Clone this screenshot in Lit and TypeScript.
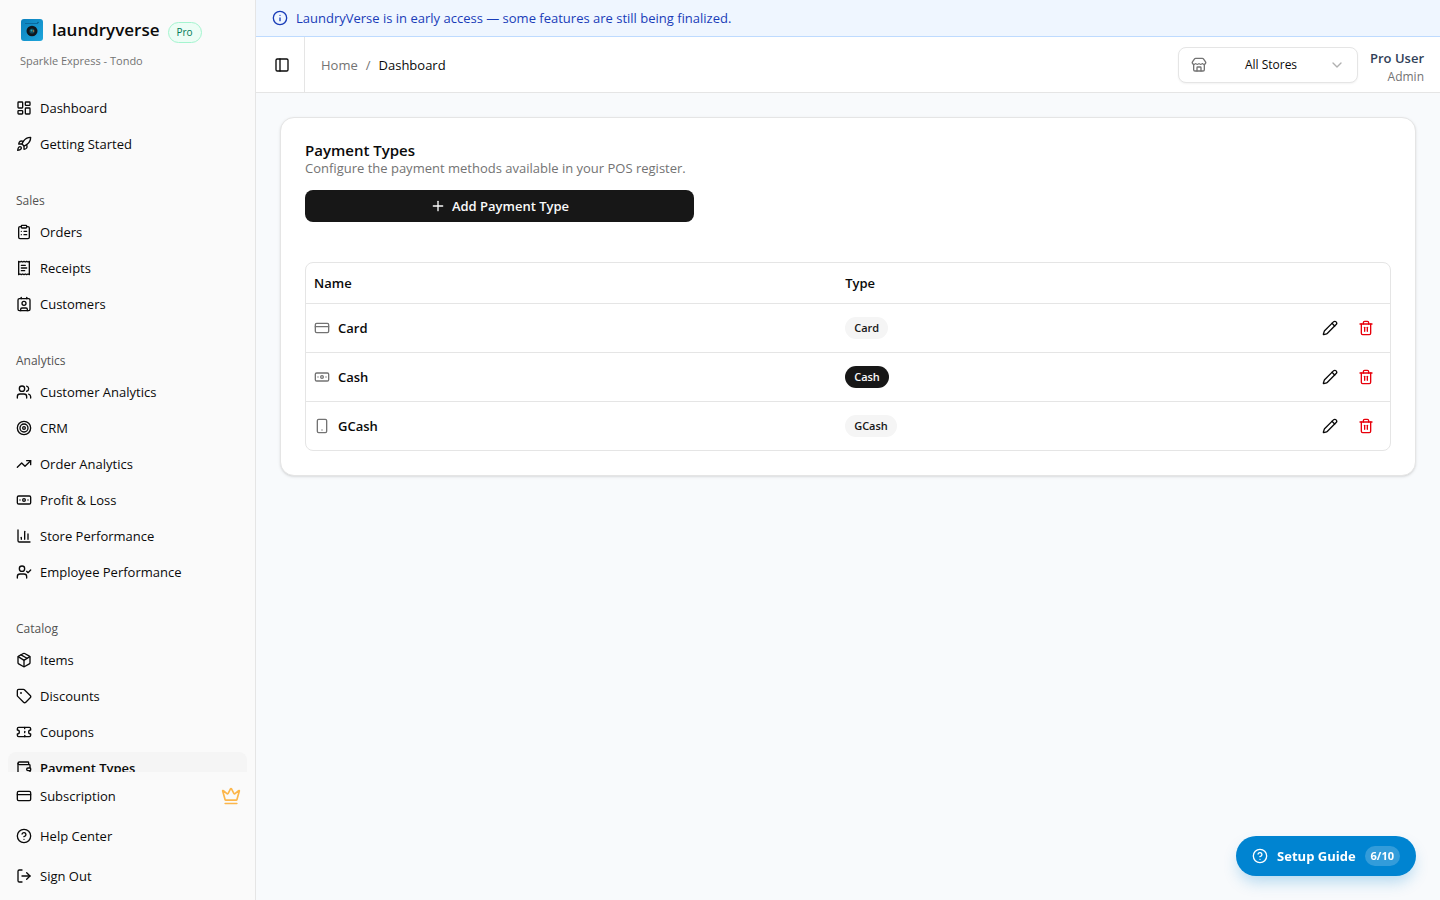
import { LitElement, html, svg, css, type SVGTemplateResult } from "lit";
import { customElement, property } from "lit/decorators.js";
import { classMap } from "lit/directives/class-map.js";

const ICONS: Record<string, SVGTemplateResult> = {
  dashboard: svg`<rect width="7" height="9" x="3" y="3" rx="1"/><rect width="7" height="5" x="14" y="3" rx="1"/><rect width="7" height="9" x="14" y="12" rx="1"/><rect width="7" height="5" x="3" y="16" rx="1"/>`,
  rocket: svg`<path d="M4.5 16.5c-1.5 1.26-2 5-2 5s3.74-.5 5-2c.71-.84.7-2.13-.09-2.91a2.18 2.18 0 0 0-2.91-.09z"/><path d="m12 15-3-3a22 22 0 0 1 2-3.95A12.88 12.88 0 0 1 22 2c0 2.72-.78 7.5-6 11a22.35 22.35 0 0 1-4 2z"/><path d="M9 12H4s.55-3.03 2-4c1.62-1.08 5 0 5 0"/><path d="M12 15v5s3.03-.55 4-2c1.08-1.62 0-5 0-5"/>`,
  clipboard: svg`<rect width="8" height="4" x="8" y="2" rx="1"/><path d="M16 4h2a2 2 0 0 1 2 2v14a2 2 0 0 1-2 2H6a2 2 0 0 1-2-2V6a2 2 0 0 1 2-2h2"/><path d="M12 11h4"/><path d="M12 16h4"/><path d="M8 11h.01"/><path d="M8 16h.01"/>`,
  receipt: svg`<path d="M4 2v20l2-1 2 1 2-1 2 1 2-1 2 1 2-1 2 1V2l-2 1-2-1-2 1-2-1-2 1-2-1-2 1Z"/><path d="M14 8H8"/><path d="M16 12H8"/><path d="M13 16H8"/>`,
  contact: svg`<path d="M16 2v2"/><path d="M7 22v-2a2 2 0 0 1 2-2h6a2 2 0 0 1 2 2v2"/><path d="M8 2v2"/><circle cx="12" cy="11" r="3"/><rect x="3" y="4" width="18" height="18" rx="2"/>`,
  users: svg`<path d="M16 21v-2a4 4 0 0 0-4-4H6a4 4 0 0 0-4 4v2"/><circle cx="9" cy="7" r="4"/><path d="M22 21v-2a4 4 0 0 0-3-3.87"/><path d="M16 3.13a4 4 0 0 1 0 7.75"/>`,
  target: svg`<circle cx="12" cy="12" r="10"/><circle cx="12" cy="12" r="6"/><circle cx="12" cy="12" r="2"/>`,
  trending: svg`<path d="M16 7h6v6"/><path d="m22 7-8.5 8.5-5-5L2 17"/>`,
  banknote: svg`<rect width="20" height="12" x="2" y="6" rx="2"/><circle cx="12" cy="12" r="2"/><path d="M6 12h.01M18 12h.01"/>`,
  chart: svg`<path d="M3 3v16a2 2 0 0 0 2 2h16"/><path d="M18 17V9"/><path d="M13 17V5"/><path d="M8 17v-3"/>`,
  userCheck: svg`<path d="m16 11 2 2 4-4"/><path d="M16 21v-2a4 4 0 0 0-4-4H6a4 4 0 0 0-4 4v2"/><circle cx="9" cy="7" r="4"/>`,
  box: svg`<path d="M11 21.73a2 2 0 0 0 2 0l7-4A2 2 0 0 0 21 16V8a2 2 0 0 0-1-1.73l-7-4a2 2 0 0 0-2 0l-7 4A2 2 0 0 0 3 8v8a2 2 0 0 0 1 1.73z"/><path d="M12 22V12"/><path d="m3.3 7 7.703 4.734a2 2 0 0 0 1.994 0L20.7 7"/><path d="m7.5 4.27 9 5.15"/>`,
  tag: svg`<path d="M12.586 2.586A2 2 0 0 0 11.172 2H4a2 2 0 0 0-2 2v7.172a2 2 0 0 0 .586 1.414l8.704 8.704a2.426 2.426 0 0 0 3.42 0l6.58-6.58a2.426 2.426 0 0 0 0-3.42z"/><circle cx="7.5" cy="7.5" r=".5" fill="currentColor"/>`,
  ticket: svg`<path d="M2 9a3 3 0 0 1 0 6v2a2 2 0 0 0 2 2h16a2 2 0 0 0 2-2v-2a3 3 0 0 1 0-6V7a2 2 0 0 0-2-2H4a2 2 0 0 0-2 2Z"/><path d="M13 5v2"/><path d="M13 17v2"/><path d="M13 11v2"/>`,
  wallet: svg`<path d="M19 7V4a1 1 0 0 0-1-1H5a2 2 0 0 0 0 4h15a1 1 0 0 1 1 1v4h-3a2 2 0 0 0 0 4h3a1 1 0 0 0 1-1v-2a1 1 0 0 0-1-1"/><path d="M3 5v14a2 2 0 0 0 2 2h15a1 1 0 0 0 1-1v-4"/>`,
  card: svg`<rect width="20" height="14" x="2" y="5" rx="2"/><path d="M2 10h20"/>`,
  help: svg`<circle cx="12" cy="12" r="10"/><path d="M9.09 9a3 3 0 0 1 5.83 1c0 2-3 3-3 3"/><path d="M12 17h.01"/>`,
  logout: svg`<path d="M9 21H5a2 2 0 0 1-2-2V5a2 2 0 0 1 2-2h4"/><path d="m16 17 5-5-5-5"/><path d="M21 12H9"/>`,
  crown: svg`<path d="M11.562 3.266a.5.5 0 0 1 .876 0L15.39 8.87a1 1 0 0 0 1.516.294L21.183 5.5a.5.5 0 0 1 .798.519l-2.834 10.246a1 1 0 0 1-.956.734H5.81a1 1 0 0 1-.957-.734L2.02 6.02a.5.5 0 0 1 .798-.519l4.276 3.664a1 1 0 0 0 1.516-.294z"/><path d="M5 21h14"/>`,
  info: svg`<circle cx="12" cy="12" r="10"/><path d="M12 16v-4"/><path d="M12 8h.01"/>`,
  panel: svg`<rect width="18" height="18" x="3" y="3" rx="2"/><path d="M9 3v18"/>`,
  store: svg`<path d="M15 21v-5a1 1 0 0 0-1-1h-4a1 1 0 0 0-1 1v5"/><path d="M17.774 10.31a1.12 1.12 0 0 0-1.549 0 2.5 2.5 0 0 1-3.451 0 1.12 1.12 0 0 0-1.548 0 2.5 2.5 0 0 1-3.452 0 1.12 1.12 0 0 0-1.549 0 2.5 2.5 0 0 1-3.77-3.248l2.889-4.184A2 2 0 0 1 7 2h10a2 2 0 0 1 1.653.873l2.895 4.192a2.5 2.5 0 0 1-3.774 3.244"/><path d="M4 10.95V19a2 2 0 0 0 2 2h12a2 2 0 0 0 2-2v-8.05"/>`,
  chevron: svg`<path d="m6 9 6 6 6-6"/>`,
  plus: svg`<path d="M5 12h14"/><path d="M12 5v14"/>`,
  phone: svg`<rect width="14" height="20" x="5" y="2" rx="2"/><path d="M12 18h.01"/>`,
  pencil: svg`<path d="M21.174 6.812a1 1 0 0 0-3.986-3.987L3.842 16.174a2 2 0 0 0-.5.83l-1.321 4.352a.5.5 0 0 0 .623.622l4.353-1.32a2 2 0 0 0 .83-.497z"/><path d="m15 5 4 4"/>`,
  trash: svg`<path d="M3 6h18"/><path d="M19 6v14a2 2 0 0 1-2 2H7a2 2 0 0 1-2-2V6"/><path d="M8 6V4a2 2 0 0 1 2-2h4a2 2 0 0 1 2 2v2"/><path d="M10 11v6"/><path d="M14 11v6"/>`,
};

interface NavItem { icon: string; label: string; active?: boolean; premium?: boolean }
interface NavGroup { title?: string; items: NavItem[] }

const GROUPS: NavGroup[] = [
  { items: [
    { icon: "dashboard", label: "Dashboard" },
    { icon: "rocket", label: "Getting Started" },
  ] },
  { title: "Sales", items: [
    { icon: "clipboard", label: "Orders" },
    { icon: "receipt", label: "Receipts" },
    { icon: "contact", label: "Customers" },
  ] },
  { title: "Analytics", items: [
    { icon: "users", label: "Customer Analytics" },
    { icon: "target", label: "CRM" },
    { icon: "trending", label: "Order Analytics" },
    { icon: "banknote", label: "Profit & Loss" },
    { icon: "chart", label: "Store Performance" },
    { icon: "userCheck", label: "Employee Performance" },
  ] },
  { title: "Catalog", items: [
    { icon: "box", label: "Items" },
    { icon: "tag", label: "Discounts" },
    { icon: "ticket", label: "Coupons" },
    { icon: "wallet", label: "Payment Types", active: true },
  ] },
];

const FOOTER: NavItem[] = [
  { icon: "card", label: "Subscription", premium: true },
  { icon: "help", label: "Help Center" },
  { icon: "logout", label: "Sign Out" },
];

const PAYMENTS = [
  { icon: "card", name: "Card", primary: false },
  { icon: "banknote", name: "Cash", primary: true },
  { icon: "phone", name: "GCash", primary: false },
];

@customElement("ui-icon")
export class UiIcon extends LitElement {
  @property() name = "";
  static styles = css`
    :host { display: block; flex: none; width: 16px; height: 16px; }
    .glyph { display: block; width: 100%; height: 100%; }
  `;
  render() {
    return html`<svg class="glyph" viewBox="0 0 24 24" fill="none" stroke="currentColor" stroke-width="2" stroke-linecap="round" stroke-linejoin="round" aria-hidden="true">${ICONS[this.name]}</svg>`;
  }
}

@customElement("side-bar")
export class SideBar extends LitElement {
  static styles = css`
    * { box-sizing: border-box; }
    :host { display: flex; flex-direction: column; flex: none; box-sizing: border-box; width: 256px; height: 100%; background: #fafafa; border-right: 1px solid #e5e5e5; color: #0a0a0a; }
    .brand { padding: 17px 20px 15px; flex: none; }
    .brand-row { display: flex; align-items: center; gap: 8px; height: 26px; }
    .logo { flex: none; width: 24px; height: 24px; }
    .word { font-size: 17px; line-height: 26px; font-weight: 600; }
    .plan { align-self: flex-end; font-size: 10px; line-height: 19px; font-weight: 500; padding: 0 8px; border: 1px solid #a4f4cf; border-radius: 11px; background: #ecfdf5; color: #007a55; }
    .store { margin: 10px 0 0; font-size: 11px; line-height: 16px; color: #737373; }
    .nav { flex: 1; min-height: 0; overflow-y: auto; scrollbar-width: none; display: flex; flex-direction: column; gap: 8px; }
    .group { padding: 8px; flex: none; }
    .title { margin: 0; display: flex; align-items: center; height: 32px; padding: 2px 8px 0; font-size: 12px; font-weight: 500; color: #525252; }
    .list { list-style: none; margin: 0; padding: 0; display: flex; flex-direction: column; gap: 4px; }
    .foot { flex: none; padding: 8px; }
    .foot .list { gap: 8px; }
    .item { display: flex; align-items: center; gap: 8px; height: 32px; padding: 0 8px; border-radius: 8px; font-size: 13px; line-height: 20px; color: inherit; text-decoration: none; white-space: nowrap; }
    .active { background: #f5f5f5; font-weight: 600; }
    .label { flex: 1; }
    .crown { color: #fcb64b; width: 20px; height: 20px; margin-right: -2px; }
  `;
  private item(i: NavItem) {
    return html`<li><a href="#" class=${classMap({ item: true, active: !!i.active })}>
      <ui-icon name=${i.icon}></ui-icon><span class="label">${i.label}</span>
      ${i.premium ? html`<ui-icon class="crown" name="crown"></ui-icon>` : null}
    </a></li>`;
  }
  render() {
    return html`
      <div class="brand">
        <div class="brand-row">
          <svg class="logo" viewBox="0 0 24 24" aria-hidden="true">
            <defs><linearGradient id="g" x1="0" y1="0" x2="1" y2="1"><stop offset="0" stop-color="#0b80bd"/><stop offset="1" stop-color="#1ea6dc"/></linearGradient></defs>
            <rect x="1" y="1" width="22" height="22" rx="3" fill="url(#g)"/>
            <path d="M5 5.500h13" stroke="#0a6a9f" stroke-width="1"/><circle cx="18" cy="4.500" r=".7" fill="#0a4f78"/>
            <ellipse cx="12" cy="13" rx="5.500" ry="5.200" fill="#10161c"/>
            <circle cx="12" cy="13" r="2.600" fill="#0f4a5c"/><circle cx="11.500" cy="12.500" r="1" fill="#2fa3a8"/><circle cx="13.500" cy="13" r=".7" fill="#d98c3a"/>
          </svg>
          <span class="word">laundryverse</span>
          <span class="plan">Pro</span>
        </div>
        <p class="store">Sparkle Express - Tondo</p>
      </div>
      <nav class="nav">
        ${GROUPS.map((g) => html`<section class="group">
          ${g.title ? html`<h2 class="title">${g.title}</h2>` : null}
          <ul class="list">${g.items.map((i) => this.item(i))}</ul>
        </section>`)}
      </nav>
      <div class="foot"><ul class="list">${FOOTER.map((i) => this.item(i))}</ul></div>
    `;
  }
}

@customElement("payment-types")
export class PaymentTypes extends LitElement {
  static styles = css`
    * { box-sizing: border-box; }
    :host { display: block; color: #0a0a0a; }
    .card { background: #fff; border: 1px solid #e5e5e5; border-radius: 14px; padding: 24px; box-shadow: 0 1px 3px rgb(0 0 0 / 0.1), 0 1px 2px -1px rgb(0 0 0 / 0.1); display: flex; flex-direction: column; gap: 40px; }
    .head { display: flex; flex-direction: column; width: fit-content; min-width: 389px; }
    .title { margin: 0; font-size: 15px; line-height: 16px; font-weight: 600; }
    .desc { margin: 0; font-size: 13px; line-height: 20px; color: #737373; }
    .add { margin-top: 12px; display: flex; align-items: center; justify-content: center; gap: 6px; height: 32px; border: 0; border-radius: 8px; background: #171717; color: #fafafa; font: inherit; font-size: 13px; font-weight: 600; cursor: pointer; }
    .frame { border: 1px solid #e5e5e5; border-radius: 8px; overflow: hidden; }
    .table { width: 100%; border-collapse: separate; border-spacing: 0; table-layout: fixed; font-size: 13px; line-height: 20px; }
    .c-name { width: 49%; }
    .c-act { width: 96px; }
    .th { height: 40px; padding: 0 8px; text-align: left; font-weight: 600; }
    .td { height: 49px; padding: 0 8px; border-top: 1px solid #e5e5e5; }
    .name { display: flex; align-items: center; gap: 8px; font-weight: 600; }
    .kind { color: #737373; }
    .badge { display: inline-block; vertical-align: middle; border-radius: 11px; padding: 1px 9px; background: #f5f5f5; color: #171717; font-size: 11px; line-height: 20px; font-weight: 600; }
    .primary { background: #171717; color: #fafafa; }
    .actions { display: flex; justify-content: flex-end; gap: 4px; }
    .act { display: grid; place-items: center; width: 32px; height: 32px; padding: 0; border: 0; border-radius: 8px; background: none; color: #0a0a0a; cursor: pointer; }
    .danger { color: #e7000b; }
  `;
  render() {
    return html`<section class="card">
      <header class="head">
        <h1 class="title">Payment Types</h1>
        <p class="desc">Configure the payment methods available in your POS register.</p>
        <button class="add" type="button"><ui-icon name="plus"></ui-icon>Add Payment Type</button>
      </header>
      <div class="frame">
        <table class="table">
          <colgroup><col class="c-name"><col><col class="c-act"></colgroup>
          <thead><tr><th class="th" scope="col">Name</th><th class="th" scope="col">Type</th><td class="th"></td></tr></thead>
          <tbody>${PAYMENTS.map((p) => html`<tr>
            <td class="td"><div class="name"><ui-icon class="kind" name=${p.icon}></ui-icon>${p.name}</div></td>
            <td class="td"><span class=${classMap({ badge: true, primary: p.primary })}>${p.name}</span></td>
            <td class="td"><div class="actions">
              <button class="act" type="button" aria-label="Edit ${p.name}"><ui-icon name="pencil"></ui-icon></button>
              <button class="act danger" type="button" aria-label="Delete ${p.name}"><ui-icon name="trash"></ui-icon></button>
            </div></td>
          </tr>`)}</tbody>
        </table>
      </div>
    </section>`;
  }
}

@customElement("app-root")
export class AppRoot extends LitElement {
  static styles = css`
    * { box-sizing: border-box; }
    :host { display: flex; height: 100vh; font-family: "Open Sans", "Noto Sans", sans-serif; font-size: 13px; line-height: 20px; color: #0a0a0a; background: #f8fafc; }
    .page { flex: 1; min-width: 0; display: flex; flex-direction: column; }
    .banner { display: flex; align-items: center; gap: 8px; padding: 8px 16px; background: #eff6ff; border-bottom: 1px solid #bedbff; color: #193cb8; }
    .top { display: flex; align-items: center; height: 56px; background: #fff; border-bottom: 1px solid #e5e5e5; padding-right: 16px; }
    .toggle { display: grid; place-items: center; align-self: stretch; width: 49px; padding: 0 0 0 4px; border: 0; border-right: 1px solid #e5e5e5; background: none; color: #0a0a0a; cursor: pointer; }
    .crumbs { flex: 1; display: flex; gap: 8px; padding-left: 16px; color: #737373; }
    .home { color: inherit; text-decoration: none; }
    .here { color: #0a0a0a; }
    .picker { display: flex; align-items: center; width: 180px; height: 36px; padding: 0 12px; border: 1px solid #e5e5e5; border-radius: 8px; background: #fff; box-shadow: 0 1px 2px rgb(0 0 0 / 0.05); color: #737373; }
    .select { flex: 1; min-width: 0; height: 100%; padding: 1px 0 0 6px; border: 0; appearance: none; background: none; font: inherit; font-size: 12px; text-align-last: center; color: #0a0a0a; cursor: pointer; }
    .caret { color: #b0b0b0; }
    .user { margin-left: 12px; padding-top: 4px; text-align: right; }
    .who { display: block; font-weight: 600; color: #314158; }
    .role { display: block; font-size: 12px; line-height: 18px; color: #737373; }
    .main { flex: 1; min-height: 0; overflow-y: auto; padding: 24px; }
    .guide { position: fixed; right: 24px; bottom: 24px; display: flex; align-items: center; gap: 9px; height: 40px; padding: 0 16px; border: 0; border-radius: 20px; background: #0084d1; color: #fff; font: inherit; font-weight: 700; box-shadow: 0 8px 16px -3px rgb(0 132 209 / 0.3); cursor: pointer; }
    .count { border-radius: 10px; padding: 0 6px; background: rgb(255 255 255 / 0.2); font-size: 11px; line-height: 20px; }
  `;
  render() {
    return html`
      <side-bar></side-bar>
      <div class="page">
        <div class="banner"><ui-icon name="info"></ui-icon><span>LaundryVerse is in early access — some features are still being finalized.</span></div>
        <header class="top">
          <button class="toggle" type="button" aria-label="Toggle sidebar"><ui-icon name="panel"></ui-icon></button>
          <nav class="crumbs"><a class="home" href="#">Home</a><span>/</span><span class="here">Dashboard</span></nav>
          <label class="picker"><ui-icon name="store"></ui-icon>
            <select class="select" aria-label="Store"><option>All Stores</option></select>
            <ui-icon class="caret" name="chevron"></ui-icon></label>
          <div class="user"><span class="who">Pro User</span><span class="role">Admin</span></div>
        </header>
        <main class="main"><payment-types></payment-types></main>
      </div>
      <button class="guide" type="button"><ui-icon name="help"></ui-icon>Setup Guide<span class="count">6/10</span></button>
    `;
  }
}
